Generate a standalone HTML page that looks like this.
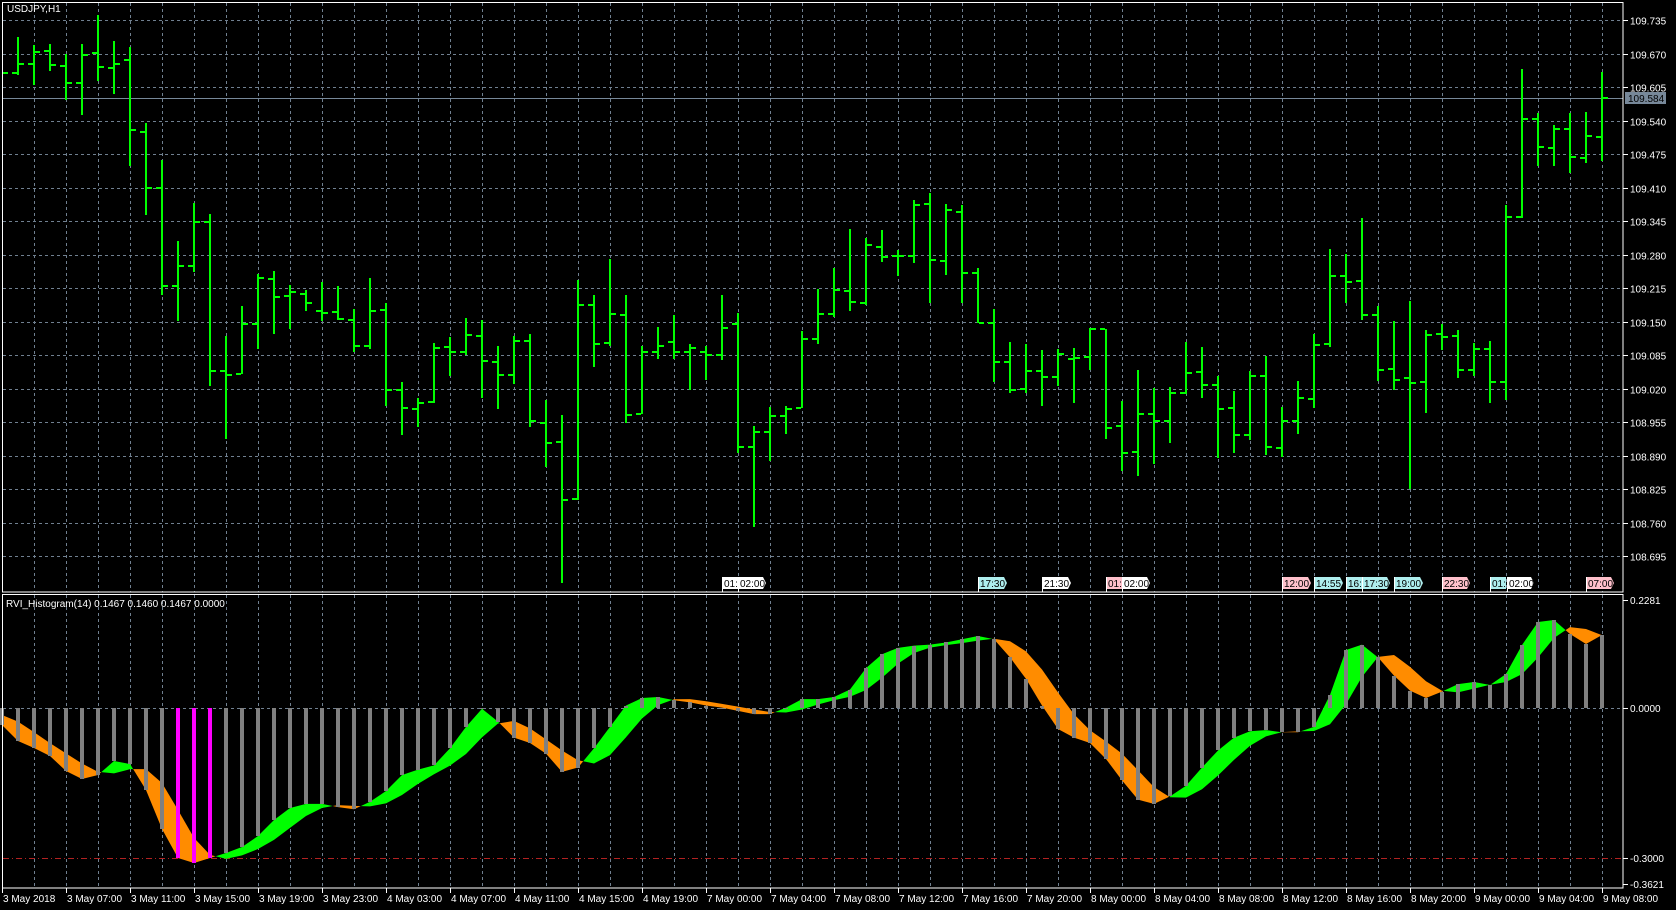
<!DOCTYPE html>
<html><head><meta charset="utf-8">
<style>
html,body{margin:0;padding:0;background:#000;width:1676px;height:910px;overflow:hidden}
svg{display:block}
text{font-family:"Liberation Sans",sans-serif;font-size:10px;fill:#fff}
</style></head>
<body>
<svg id="s" width="1676" height="910" xmlns="http://www.w3.org/2000/svg" shape-rendering="crispEdges">
<rect width="1676" height="910" fill="#000"/>
<g id="grid"></g>
<g id="band" shape-rendering="auto"></g>
<g id="hist"></g>
<g id="bars"></g>
<g id="tags"></g>
<g id="axes"></g>
</svg>
<script>
const NS="http://www.w3.org/2000/svg";
function el(p,t,a,txt){const e=document.createElementNS(NS,t);for(const k in a)e.setAttribute(k,a[k]);if(txt!==undefined)e.textContent=txt;document.getElementById(p).appendChild(e);return e;}
// grid
for(let x=34;x<1623;x+=32){
 el('grid','line',{x1:x+.5,y1:3,x2:x+.5,y2:592,stroke:'#708090','stroke-dasharray':'3,3'});
 el('grid','line',{x1:x+.5,y1:595,x2:x+.5,y2:888,stroke:'#708090','stroke-dasharray':'3,3'});
}
const labs=["109.735","109.670","109.605","109.540","109.475","109.410","109.345","109.280","109.215","109.150","109.085","109.020","108.955","108.890","108.825","108.760","108.695"];
for(let i=0;i<17;i++){const y=Math.round(20.3+33.5*i)+.5;
 el('grid','line',{x1:3,y1:y,x2:1623,y2:y,stroke:'#708090','stroke-dasharray':'3,3'});
 el('axes','line',{x1:1623,y1:y,x2:1628,y2:y,stroke:'#fff'});
 el('axes','text',{x:1630,y:y+4},labs[i]);
}
// current price line
el('grid','line',{x1:3,y1:98.5,x2:1623,y2:98.5,stroke:'#778899'});
el('axes','rect',{x:1625,y:92,width:41,height:12,fill:'#778899'});
el('axes','text',{x:1628,y:102,style:'fill:#000'},"109.584");
// indicator levels
el('grid','line',{x1:3,y1:708.5,x2:1623,y2:708.5,stroke:'#708090','stroke-dasharray':'3,3'});
el('grid','line',{x1:3,y1:858.5,x2:1623,y2:858.5,stroke:'#b22222','stroke-dasharray':'6,3,1,3'});
[[600,"0.2281"],[708,"0.0000"],[858,"-0.3000"],[884,"-0.3621"]].forEach(([y,t])=>{
 el('axes','line',{x1:1623,y1:y+.5,x2:1628,y2:y+.5,stroke:'#fff'});
 el('axes','text',{x:1630,y:y+4},t);
});
// price bars (zoom units)
const B=[[170,200,190,190],[97,195,192,167],[117,221,167,135],[115,185,132,169],[142,262,172,216],[115,300,216,143],[38,212,138,175],[107,245,177,166],[123,435,158,339],[321,563,344,491],[418,770,491,747],[630,840,747,696],[531,710,696,580],[559,1010,580,969],[878,1146,969,980],[800,978,977,846],[716,911,846,726],[708,874,729,776],[745,861,773,762],[757,814,768,791],[737,838,812,817],[747,836,815,833],[807,919,835,904],[727,911,904,812],[793,1060,810,1018],[998,1138,1018,1066],
[1040,1115,1068,1052],[896,1054,1051,909],[881,983,908,919],[831,927,919,875],[836,1040,877,943],[904,1068,945,980],[878,1003,980,892],[873,1115,892,1100],[1045,1220,1105,1157],[1085,1523,1155,1306],[731,1306,1304,797],[771,958,797,899],[678,905,896,820],[771,1105,823,1084],[903,1082,1081,921],[855,937,921,904],[823,937,893,919],[898,1020,919,909],[903,993,919,928],[771,942,928,857],[818,1184,847,1169],[1113,1378,1167,1130],[1064,1206,1130,1087],[1062,1133,1088,1070],[866,1067,1066,887],[754,898,887,820],
[700,828,820,758],[598,813,760,790],[621,796,793,641],[601,685,645,671],[653,720,670,670],[522,688,670,535],[505,793,533,679],[533,718,681,548],[536,793,553,713],[701,843,713,843],[808,998,845,947],[895,1028,947,1018],[900,1028,1016,969],[915,1060,969,985],[913,1008,985,925],[910,1052,937,935],[856,968,932,860],[861,1148,861,1118],[1048,1232,1113,1183],[967,1245,1181,1083],[1013,1212,1081,1101],[1011,1157,1101,1027],[895,1030,1027,976],[907,1040,973,1005],[983,1198,1005,1068],[1023,1183,1066,1138],
[970,1150,1138,982],[930,1190,982,1168],[1063,1193,1170,1101],[996,1133,1101,1040],[873,1065,1042,901],[651,908,899,720],[665,793,722,737],[570,837,734,823],[800,995,823,966],[840,1020,964,992],[787,1277,987,1002],[862,1080,997,875],[848,915,872,880],[862,988,878,966],[897,983,966,911],[891,1052,912,998],[537,1046,998,567],[181,570,567,311],[295,433,311,385],[327,433,387,337],[295,453,337,411],[293,425,414,356],[187,420,359,256]];
const S=600/1568;
B.forEach((b,k)=>{const x=2+16*k;const hi=Math.round(b[0]*S),lo=Math.round(b[1]*S),o=Math.round(b[2]*S),c=Math.round(b[3]*S);
 if(k>0)el('bars','rect',{x:x-1,y:hi,width:2,height:Math.max(1,lo-hi),fill:'#00ff00'});
 if(k>0)el('bars','rect',{x:x-6,y:o-1,width:5,height:2,fill:'#00ff00'});
 el('bars','rect',{x:x+1,y:c-1,width:5,height:2,fill:'#00ff00'});
});
// indicator
const T1=[725,741,748,756,771,779,775,761,764,790,829,858,863,858,853,847,836,820,808];
const D=[752,752,755,757,750,740,725,720,716,700,680,663,675,690,695,705,722,718,700,680,660,653,652,655,657,660,662,665,668,668,662,654,654,652,645,625,612,606,604,603,601,598,595,598,615,635,660,682,690,695,710,730,748,752,745,735,718,702,690,684,683,685,685,680,650,608,603,615,632,646,653,647,640,638];
const T2=[685,674,645,622,620,634,644,635];
const M=T1.concat(D.map(v=>v*1.069)).concat(T2);
const Sg=M.map((v,k)=>{const g=i=>M[Math.max(0,i)]+(i<0?-12:0);return (g(k)+2*g(k-1)+2*g(k-2)+g(k-3))/6;});
const X=k=>2+16*k;
for(let k=0;k<M.length-1;k++){
 const x0=X(k),x1=X(k+1),m0=M[k],m1=M[k+1],s0=Sg[k],s1=Sg[k+1];
 const d0=m0-s0,d1=m1-s1; // positive => main below signal (orange)
 const col=d=>d>0?'#ff8c00':'#00ff00';
 if(d0*d1>=0){el('band','polygon',{points:`${x0},${m0} ${x1},${m1} ${x1},${s1} ${x0},${s0}`,fill:col(d0+d1)});}
 else{const t=d0/(d0-d1);const xi=x0+t*(x1-x0),yi=m0+t*(m1-m0);
  el('band','polygon',{points:`${x0},${m0} ${xi},${yi} ${x0},${s0}`,fill:col(d0)});
  el('band','polygon',{points:`${xi},${yi} ${x1},${m1} ${x1},${s1}`,fill:col(d1)});}
}
M.forEach((y,k)=>{const x=X(k);const mag=(k>=11&&k<=13);
 const yy=Math.round(y);const top=Math.min(708,yy),h=Math.abs(yy-708);
 el('hist','rect',{x:x-2,y:top,width:4,height:Math.max(1,h),fill:mag?'#ff00ff':'#808080'});
});
// borders
el('axes','rect',{x:2.5,y:2.5,width:1620.5,height:589.5,fill:'none',stroke:'#fff'});
el('axes','rect',{x:2.5,y:594.5,width:1620.5,height:293.5,fill:'none',stroke:'#fff'});
el('axes','text',{x:7,y:12},"USDJPY,H1");
el('axes','text',{x:6,y:607},"RVI_Histogram(14) 0.1467 0.1460 0.1467 0.0000");
// time axis
const TL=["3 May 2018","3 May 07:00","3 May 11:00","3 May 15:00","3 May 19:00","3 May 23:00","4 May 03:00","4 May 07:00","4 May 11:00","4 May 15:00","4 May 19:00","7 May 00:00","7 May 04:00","7 May 08:00","7 May 12:00","7 May 16:00","7 May 20:00","8 May 00:00","8 May 04:00","8 May 08:00","8 May 12:00","8 May 16:00","8 May 20:00","9 May 00:00","9 May 04:00","9 May 08:00"];
TL.forEach((t,i)=>{const x=2+64*i;
 el('axes','line',{x1:x+.5,y1:888,x2:x+.5,y2:893,stroke:'#fff'});
 el('axes','text',{x:x+1,y:902},t);
});
// tags
const TG=[[722,738,'#fff',"01:"],[738,766,'#fff',"02:00"],[978,1007,'#aeeeee',"17:30"],[1042,1071,'#fff',"21:30"],[1106,1122,'#ffc0cb',"01:"],[1122,1150,'#fff',"02:00"],[1282,1311,'#ffc0cb',"12:00"],[1314,1343,'#aeeeee',"14:55"],[1346,1362,'#aeeeee',"16:"],[1362,1390,'#aeeeee',"17:30"],[1394,1423,'#aeeeee',"19:00"],[1442,1470,'#ffc0cb',"22:30"],[1490,1506,'#aeeeee',"01:"],[1507,1534,'#fff',"02:00"],[1586,1614,'#ffc0cb',"07:00"]];
TG.forEach(([a,b,c,t])=>{const pt=t.length>3;
 el('tags','polygon',{points:pt?`${a},577 ${b-3},577 ${b},583 ${b-3},589 ${a},589`:`${a},577 ${b},577 ${b},589 ${a},589`,fill:c});
 el('tags','line',{x1:a+.5,y1:577,x2:a+.5,y2:592,stroke:'#fff'});
 el('tags','text',{x:a+2,y:587,style:'fill:#000'},t);
});
</script>
</body></html>
